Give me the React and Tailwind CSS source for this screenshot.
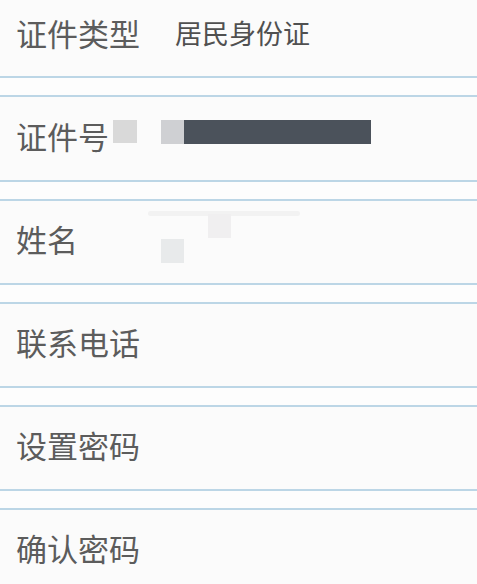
export default function App() {
  const font = { fontFamily: '"Noto Sans CJK SC", "Noto Sans", sans-serif' };
  const Sep = () => (
    <div className="flex flex-col shrink-0">
      <div className="h-[2px] bg-[#bcd6e6]" />
      <div className="h-[17px] bg-[#fdfdfd]" />
      <div className="h-[2px] bg-[#bcd6e6]" />
    </div>
  );
  const Label = ({ children }) => (
    <span className="text-[31px] leading-none text-[#5c5c5c] w-[159px] shrink-0">{children}</span>
  );
  return (
    <div className="w-[477px] h-[584px] overflow-hidden bg-[#fbfbfb] flex flex-col" style={font}>
      <div className="h-[76px] shrink-0 flex items-center pl-[16px] pb-[12px]">
        <Label>证件类型</Label>
        <span className="text-[27px] leading-none text-[#505050] pt-[1px]">居民身份证</span>
      </div>
      <Sep />
      <div className="h-[83px] shrink-0 flex items-center pl-[16px] pb-[7px] relative">
        <span className="text-[31px] leading-none text-[#5c5c5c]">证件号</span>
        <div className="absolute left-[113px] top-[23px] w-[24px] h-[23px] bg-[#d9d9d9]" />
        <div className="absolute left-[161px] top-[23px] w-[23px] h-[24px] bg-[#cfd0d3]" />
        <div className="absolute left-[184px] top-[23px] w-[187px] h-[24px] bg-[#4b525b]" />
      </div>
      <Sep />
      <div className="h-[82px] shrink-0 flex items-center pl-[16px] pb-[7px] relative">
        <span className="text-[31px] leading-none text-[#5c5c5c]">姓名</span>
        <div className="absolute left-[148px] top-[10px] w-[152px] h-[5px] bg-[#f2f2f2] rounded-full" />
        <div className="absolute left-[208px] top-[13px] w-[23px] h-[24px] bg-[#f0eff0]" />
        <div className="absolute left-[161px] top-[38px] w-[23px] h-[24px] bg-[#e8eaeb]" />
      </div>
      <Sep />
      <div className="h-[82px] shrink-0 flex items-center pl-[16px] pb-[7px]">
        <span className="text-[31px] leading-none text-[#5c5c5c]">联系电话</span>
      </div>
      <Sep />
      <div className="h-[82px] shrink-0 flex items-center pl-[16px] pb-[7px]">
        <span className="text-[31px] leading-none text-[#5c5c5c]">设置密码</span>
      </div>
      <Sep />
      <div className="h-[82px] shrink-0 flex items-center pl-[16px] pb-[7px]">
        <span className="text-[31px] leading-none text-[#5c5c5c]">确认密码</span>
      </div>
    </div>
  );
}
